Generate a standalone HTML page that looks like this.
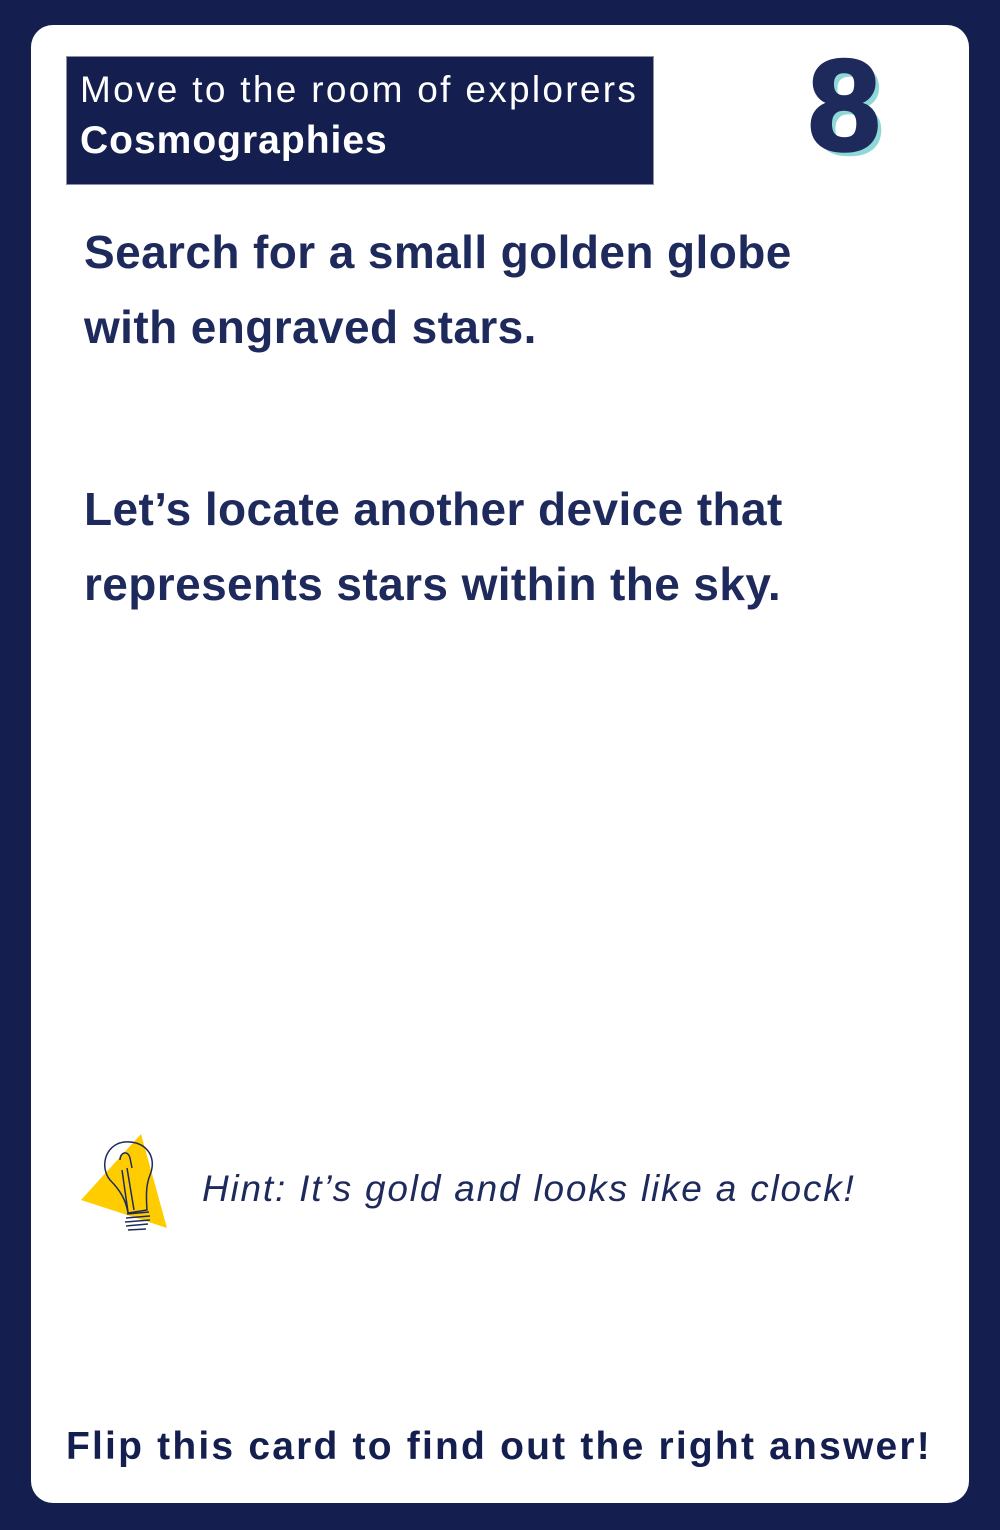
<!DOCTYPE html>
<html><head><meta charset="utf-8"><style>
*{margin:0;padding:0;box-sizing:border-box}
body{width:1000px;height:1530px;background:#141f4f;position:relative;overflow:hidden;font-family:"Liberation Sans",sans-serif}
.card{position:absolute;left:31px;top:25px;width:938px;height:1478px;background:#fff;border-radius:22px}
.hdr{position:absolute;left:66px;top:56px;width:588px;height:129px;background:#141f4f;color:#fff;border:1px solid #8a90a8}
.hdr .a{position:absolute;left:13px;top:12px;font-size:37px;letter-spacing:2.3px}
.hdr .b{position:absolute;left:13px;top:62px;font-size:39px;font-weight:bold;letter-spacing:1px}
.num{position:absolute;left:808px;top:34px;font-size:130px;font-weight:bold;color:#1f2a5c;text-shadow:5px 5px 0 #8fd8d8;line-height:1.1;-webkit-text-stroke:3px #1f2a5c}
.t{position:absolute;left:84px;font-size:46px;font-weight:bold;color:#1f2a5c;line-height:75px;letter-spacing:0.4px}
.hint{position:absolute;left:202px;top:1168px;font-size:37px;font-style:italic;color:#1f2a5c;letter-spacing:1.8px}
.foot{position:absolute;left:66px;top:1425px;font-size:39px;font-weight:bold;color:#141f4f;letter-spacing:2.2px}
</style></head><body>
<div class="card"></div>
<div class="hdr"><div class="a">Move to the room of explorers</div><div class="b">Cosmographies</div></div>
<div class="num">8</div>
<div class="t" style="top:215px">Search for a small golden globe<br>with engraved stars.</div>
<div class="t" style="top:472px">Let’s locate another device that<br>represents stars within the sky.</div>
<svg style="position:absolute;left:70px;top:1120px" width="120" height="130" viewBox="70 1120 120 130">
<polygon points="81,1200 141,1134 167,1228" fill="#ffcc00"/>
<g fill="none" stroke="#1f2a5c" stroke-width="1.5">
<path d="M128,1213 C126,1200 120,1190 110,1180 C100,1168 104,1145 124,1142 C144,1140 158,1155 150,1175 C146,1185 146,1195 147,1210 Z"/>
<path d="M122,1170 L128,1212 M127,1168 L134,1210 M120,1160 C120,1152 128,1150 130,1158 L132,1168"/>
<path d="M127,1214 L149,1212 M126,1218 L150,1216 M125,1222 L150,1220 M126,1226 L148,1224 M128,1230 L146,1229"/>
</g>
</svg>
<div class="hint">Hint: It’s gold and looks like a clock!</div>
<div class="foot">Flip this card to find out the right answer!</div>
</body></html>
